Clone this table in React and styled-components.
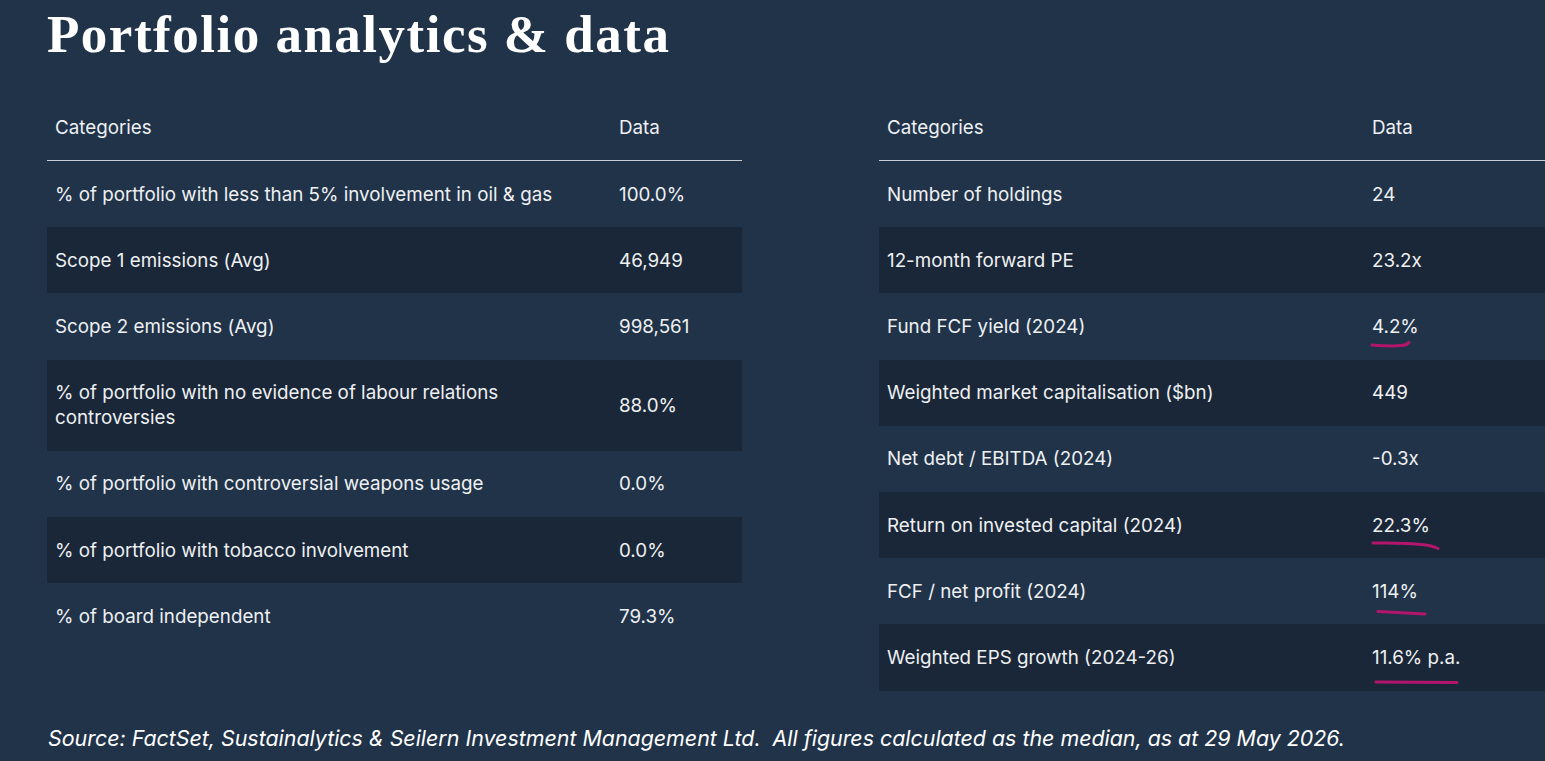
import React from 'react';
import styled, { createGlobalStyle } from 'styled-components';

const GlobalStyle = createGlobalStyle`
	html, body {
		margin: 0;
		padding: 0;
		background: #203349;
		overflow: hidden;
	}
	body {
		font-family: Inter, "Liberation Sans", sans-serif;
		color: #eef0f2;
	}
`;

const leftRows = [
	{ label: '% of portfolio with less than 5% involvement in oil & gas', value: '100.0%' },
	{ label: 'Scope 1 emissions (Avg)', value: '46,949' },
	{ label: 'Scope 2 emissions (Avg)', value: '998,561' },
	{ label: '% of portfolio with no evidence of labour relations controversies', value: '88.0%' },
	{ label: '% of portfolio with controversial weapons usage', value: '0.0%' },
	{ label: '% of portfolio with tobacco involvement', value: '0.0%' },
	{ label: '% of board independent', value: '79.3%' },
];

// hand-drawn pink marks under a few of the figures
const rightRows = [
	{ label: 'Number of holdings', value: '24' },
	{ label: '12-month forward PE', value: '23.2x' },
	{ label: 'Fund FCF yield (2024)', value: '4.2%', mark: 'M0 31 Q20 32.5 30 31.5 Q35 31 37 28.5' },
	{ label: 'Weighted market capitalisation ($bn)', value: '449' },
	{ label: 'Net debt / EBITDA (2024)', value: '-0.3x' },
	{ label: 'Return on invested capital (2024)', value: '22.3%', mark: 'M1 30 Q35 29.5 50 31.5 Q60 32.5 66 35.5' },
	{ label: 'FCF / net profit (2024)', value: '114%', mark: 'M6 32.5 L53 35' },
	{ label: 'Weighted EPS growth (2024-26)', value: '11.6% p.a.', mark: 'M4 37 L85 37.5' },
];

function DataTable({ rows, labelWidth }) {
	return (
		<Table>
			<colgroup>
				<col style={{ width: labelWidth }} />
				<col />
			</colgroup>
			<thead>
				<tr>
					<HeadCell>Categories</HeadCell>
					<HeadCell>Data</HeadCell>
				</tr>
			</thead>
			<tbody>
				{rows.map((row, i) => (
					<Row key={row.label} $dark={i % 2 === 1}>
						<Cell>{row.label}</Cell>
						<Cell>
							<Value>
								{row.value}
								{row.mark && (
									<Scribble width="100" height="45" viewBox="0 0 100 45">
										<path d={row.mark} />
									</Scribble>
								)}
							</Value>
						</Cell>
					</Row>
				))}
			</tbody>
		</Table>
	);
}

export default function App() {
	return (
		<>
			<GlobalStyle />
			<Page>
				<Title>Portfolio analytics &amp; data</Title>
				<Tables>
					<DataTable rows={leftRows} labelWidth="564px" />
					<DataTable rows={rightRows} labelWidth="485px" />
				</Tables>
				<Source>
					Source: FactSet, Sustainalytics &amp; Seilern Investment Management Ltd.&nbsp; All figures
					calculated as the median, as at 29 May 2026.
				</Source>
			</Page>
		</>
	);
}

const Page = styled.div`
	padding: 0 0 0 47px;
	width: 1600px;
`;

const Title = styled.h1`
	margin: 0;
	font-family: "Liberation Serif", "DejaVu Serif", serif;
	font-weight: bold;
	font-size: 53px;
	line-height: 68px;
	letter-spacing: 1.5px;
	color: #ffffff;
`;

const Tables = styled.div`
	display: grid;
	grid-template-columns: 695px 695px;
	column-gap: 137px;
	align-items: start;
	margin-top: 27px;
`;

const Table = styled.table`
	width: 695px;
	border-collapse: collapse;
	table-layout: fixed;
`;

const HeadCell = styled.th`
	text-align: left;
	font-weight: normal;
	font-size: 18.8px;
	line-height: 25px;
	padding: 20px 8px;
	border-bottom: 1px solid #c9ced6;
`;

const Row = styled.tr`
	background: ${(p) => (p.$dark ? '#1a2738' : 'transparent')};
`;

const Cell = styled.td`
	font-size: 18.8px;
	line-height: 25px;
	padding: 20.6px 8px;
	vertical-align: middle;
`;

const Value = styled.span`
	position: relative;
	display: inline-block;
`;

const Scribble = styled.svg`
	position: absolute;
	left: 0;
	top: 0;
	overflow: visible;
	pointer-events: none;
	path {
		fill: none;
		stroke: #b3156c;
		stroke-width: 3;
		stroke-linecap: round;
	}
`;

const Source = styled.p`
	margin: 32px 0 0 1px;
	font-style: italic;
	font-size: 21.4px;
	line-height: 30px;
	color: #ffffff;
`;
